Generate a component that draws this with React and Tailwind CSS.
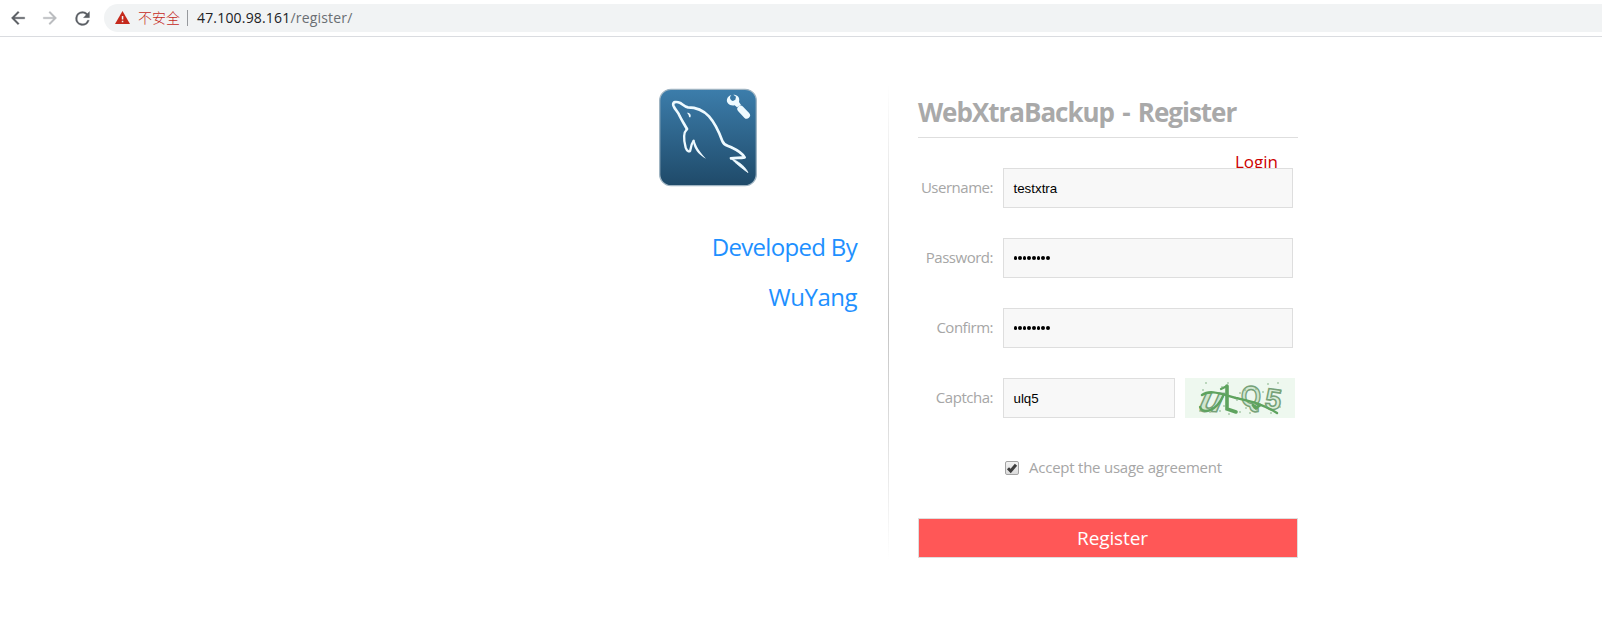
function BackIcon({ className }) {
  return (
    <svg viewBox="0 0 24 24" className={className} fill="currentColor" stroke="currentColor" strokeWidth="0.4">
      <path d="M20 11H7.83l5.59-5.59L12 4l-8 8 8 8 1.41-1.41L7.83 13H20v-2z" />
    </svg>
  );
}

function ReloadIcon({ className }) {
  return (
    <svg viewBox="0 0 24 24" className={className} fill="currentColor" stroke="currentColor" strokeWidth="0.3">
      <path d="M17.65 6.35A7.958 7.958 0 0 0 12 4a8 8 0 1 0 7.73 10h-2.08A6 6 0 1 1 12 6c1.66 0 3.14.69 4.22 1.78L13 11h7V4l-2.35 2.35z" />
    </svg>
  );
}

function WarningIcon() {
  return (
    <svg viewBox="0 0 15 13" className="-mt-px h-[13px] w-[15px] shrink-0">
      <path d="M7.5 0 15 13H0z" fill="#c5291c" />
      <path d="M6.8 5h1.5v3.6H6.8zM6.8 9.7h1.5v1.5H6.8z" fill="#f1f3f4" />
    </svg>
  );
}

function Toolbar() {
  return (
    <header className="flex h-[37px] items-start border-b border-[#dadce0] pt-1">
      <div className="flex h-7 w-[104px] shrink-0 items-center pl-2">
        <BackIcon className="h-5 w-5 text-[#5a5e63]" />
        <BackIcon className="ml-3 h-5 w-5 rotate-180 text-[#b9bbbe]" />
        <ReloadIcon className="ml-[11.5px] h-[21px] w-[21px] text-[#5a5e63]" />
      </div>
      <div className="flex h-7 flex-1 items-center rounded-l-full bg-[#f1f3f4] pl-[11px] font-['Open_Sans','Noto_Sans_CJK_SC',sans-serif] text-sm">
        <WarningIcon />
        <span className="ml-2 whitespace-nowrap font-light text-[#c5291c]">不安全</span>
        <span className="ml-[7px] h-4 w-px bg-[#96999d]" />
        <span className="ml-[9px] whitespace-nowrap tracking-[0.18px] text-[#202124]">
          47.100.98.161<span className="text-[#6a6e73]">/register/</span>
        </span>
      </div>
    </header>
  );
}

function DolphinLogo() {
  return (
    <svg viewBox="24 21 300 300" className="h-[100px] w-[100px]">
      <defs>
        <linearGradient id="tile" x1="0" y1="0" x2="0" y2="1">
          <stop offset="0" stopColor="#3c7dab" />
          <stop offset="1" stopColor="#1f4a69" />
        </linearGradient>
      </defs>
      <rect x="29" y="28" width="290" height="289" rx="34" fill="url(#tile)" stroke="#9fb4c2" strokeWidth="4" />
      <g fill="none" stroke="#eefaff" strokeLinejoin="round" strokeLinecap="round">
        <path
          d="M111 147C102 131 95 120 89 108C86 97 74 89 70 76C67 65 79 64 91 69C98 73 103 80 114 82C139 82 160 91 177 109C199 134 208 158 217 183C222 198 233 195 248 204C263 211 276 219 284 232C270 235 256 232 243 235"
          strokeWidth="8"
        />
        <path d="M111 147C101 157 101 181 107 203C111 216 121 217 121 210C123 197 126 189 131 182" strokeWidth="7" />
      </g>
      <path d="M128 181L134 183C142 207 153 220 168 236C150 227 137 213 131 195z" fill="#eefaff" />
      <path d="M241 233C259 253 276 264 294 278C286 260 270 248 250 238z" fill="#eefaff" stroke="#eefaff" strokeWidth="2" />
      <path d="M111 98C119 98 125 104 121 112C118 113 116 109 116 105z" fill="#eefaff" />
      <path
        d="M244 45C236 53 242 61 249 63L256 59L258 50L250 44C261 44 271 51 267 66L273 75L261 82L254 76C239 79 228 69 231 58C232 51 239 46 244 45z"
        fill="#eefaff"
      />
      <path d="M272 87L290 106" stroke="#eefaff" strokeWidth="20" strokeLinecap="round" />
    </svg>
  );
}

const SPECKS = [
  [21, 5], [43, 5], [55, 15], [37, 9], [71, 11], [83, 6], [93, 5], [18, 12], [60, 12],
  [15, 33], [25, 34], [35, 33], [39, 28], [44, 36], [55, 34], [61, 30], [65, 35], [72, 33],
  [78, 14], [96, 13], [86, 35], [52, 22], [95, 29], [81, 28],
];

function Captcha() {
  return (
    <svg viewBox="0 0 110 40" className="ml-2.5 h-10 w-[110px] bg-[#eef8ef]">
      <g fontFamily="Liberation Sans, sans-serif" fontWeight="bold" stroke="#76a178" strokeWidth="1.5">
        <text transform="translate(11 33) rotate(2) skewX(-22)" fontSize="35" textLength="23" lengthAdjust="spacingAndGlyphs" fill="#cfe6cf">u</text>
        <text transform="translate(56 28)" fontSize="30" textLength="20" lengthAdjust="spacingAndGlyphs" fill="#cfe6cf">Q</text>
        <text transform="translate(79 30) rotate(8)" fontSize="29" textLength="16" lengthAdjust="spacingAndGlyphs" fill="#d9edd9">5</text>
      </g>
      <g fill="none" stroke="#5ea35e" strokeLinecap="round">
        <path d="M17 17C25 11 36 16 51 20C64 23 76 25 92 35" strokeWidth="2.4" />
        <path d="M42 8L42 31L51 34" strokeWidth="3.6" />
        <path d="M42 8L36 11M15 29C18 36 31 34 38 18" strokeWidth="2.2" />
        <path d="M68 27L71 30L75 27" strokeWidth="3" />
      </g>
      {SPECKS.map(([x, y]) => (
        <circle key={`${x}-${y}`} cx={x} cy={y} r="0.8" fill="#7cac7c" />
      ))}
    </svg>
  );
}

function Field({ label, type = 'text', value, narrow, children }) {
  return (
    <div className="relative flex h-10 items-center">
      <label className="flex w-[75px] justify-end whitespace-nowrap pb-0.5 text-[15px] leading-[38px] tracking-[-0.48px] text-[#a6a6a6]">
        {label}
      </label>
      <div
        className={`ml-2.5 flex h-10 items-center border border-[#dedede] bg-[#f8f8f8] pl-[9.5px] ${narrow ? 'w-[172px]' : 'w-[290px]'}`}
      >
        {type === 'password' ? (
          <span className="flex gap-[1.07px]">
            {Array.from({ length: value.length }, (_, i) => (
              <span key={i} className="h-[3.6px] w-[3.6px] rounded-full bg-black" />
            ))}
          </span>
        ) : (
          <span className="pt-0.5 font-['Liberation_Sans',Arial,sans-serif] text-[13.33px] text-black">{value}</span>
        )}
      </div>
      {children}
    </div>
  );
}

export default function App() {
  return (
    <div className="h-[642px] w-full overflow-hidden bg-white font-['Open_Sans','Noto_Sans',sans-serif]">
      <Toolbar />
      <main className="flex pl-[658px] pt-[48px]">
        <aside className="w-[200px] shrink-0 pt-0.5">
          <DolphinLogo />
          <div className="mt-[35px] whitespace-nowrap pr-px text-right text-2xl leading-[50px] text-[#1e90ff]">
            <p className="tracking-[-0.68px]">Developed By</p>
            <p className="tracking-[-0.5px]">WuYang</p>
          </div>
        </aside>
        <div className="ml-[30px] h-[475px] w-px shrink-0 bg-linear-to-b from-white via-[#c4c4c4] to-white" />
        <section className="ml-[29px] w-[380px] shrink-0">
          <h1 className="h-[53px] whitespace-nowrap border-b border-[#dedede] text-[26px] font-bold leading-[54px] tracking-[-1.02px] text-[#a9a9a9] [word-spacing:2.5px]">
            WebXtraBackup - Register
          </h1>
          <div className="flex h-[30px] justify-end pr-5 pt-2.5">
            <a className="text-[17px] leading-[28px] text-[#c00]">Login</a>
          </div>
          <form className="flex flex-col gap-[30px]">
            <Field label="Username:" value="testxtra" />
            <Field label="Password:" type="password" value="12345678" />
            <Field label="Confirm:" type="password" value="12345678" />
            <Field label="Captcha:" value="ulq5" narrow>
              <Captcha />
            </Field>
            <div className="flex h-10 items-center pl-[87px]">
              <span className="flex h-3.5 w-3.5 items-center justify-center rounded-[2px] border border-[#a3a3a3] bg-linear-to-b from-[#f2f2f2] to-[#dcdcdc]">
                <svg viewBox="0 0 12 12" className="h-3 w-3 shrink-0">
                  <path d="M2 6.3L4.7 9L10 2.8" fill="none" stroke="#3e3e3e" strokeWidth="3" />
                </svg>
              </span>
              <span className="ml-2.5 whitespace-nowrap pb-0.5 text-[15px] tracking-[-0.24px] text-[#a6a6a6]">
                Accept the usage agreement
              </span>
            </div>
            <button
              type="button"
              className="h-10 w-[380px] border border-[#dedede] bg-[#ff5757] pl-[9px] text-[19px] leading-[38px] tracking-[-0.1px] text-white"
            >
              Register
            </button>
          </form>
        </section>
      </main>
    </div>
  );
}
